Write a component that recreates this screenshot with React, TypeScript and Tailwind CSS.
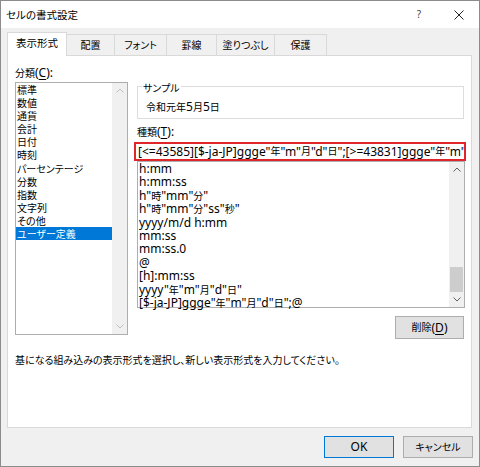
import React from "react";

const CJK = /([\u3000-\u30ff\u3400-\u9fff\uff00-\uffef]+)/;

function T({ s }: { s: string }) {
  const parts = s.split(CJK);
  return (
    <>
      {parts.map((p, i) =>
        p === "" ? null : i % 2 === 1 ? (
          <span key={i} className="text-[10px]">
            {p}
          </span>
        ) : (
          <span key={i}>{p}</span>
        )
      )}
    </>
  );
}

function Up({ color }: { color: string }) {
  return (
    <svg width="8" height="5" viewBox="0 0 8 5">
      <path d="M0.5 4.5 L4 1 L7.5 4.5" fill="none" stroke={color} strokeWidth="1" />
    </svg>
  );
}
function Down({ color }: { color: string }) {
  return (
    <svg width="8" height="5" viewBox="0 0 8 5">
      <path d="M0.5 0.5 L4 4 L7.5 0.5" fill="none" stroke={color} strokeWidth="1" />
    </svg>
  );
}

const categories = [
  "標準",
  "数値",
  "通貨",
  "会計",
  "日付",
  "時刻",
  "パーセンテージ",
  "分数",
  "指数",
  "文字列",
  "その他",
  "ユーザー定義",
];

const formats = [
  "h:mm",
  "h:mm:ss",
  'h"時"mm"分"',
  'h"時"mm"分"ss"秒"',
  "yyyy/m/d h:mm",
  "mm:ss",
  "mm:ss.0",
  "@",
  "[h]:mm:ss",
  'yyyy"年"m"月"d"日"',
  '[$-ja-JP]ggge"年"m"月"d"日";@',
];

const tabs = [
  { label: "配置", w: "w-[48px]" },
  { label: "フォント", w: "w-[52px]" },
  { label: "罫線", w: "w-[50px]" },
  { label: "塗りつぶし", w: "w-[58px]" },
  { label: "保護", w: "w-[52px]" },
];

export default function App() {
  return (
    <div className="w-[480px] h-[467px] border border-[#8c8c8c] bg-[#f0f0f0] flex flex-col text-black text-[12px] [font-family:'Noto_Sans','Noto_Sans_CJK_JP',sans-serif] [font-feature-settings:'palt'] overflow-hidden">
      {/* title bar */}
      <div className="h-[27px] bg-white flex items-center shrink-0">
        <div className="pl-[5px] leading-[14px] text-[10.5px]">セルの書式設定</div>
        <div className="ml-auto flex h-full">
          <div className="w-[40px] h-full flex items-center justify-center text-[10px] text-[#444]">?</div>
          <div className="w-[40px] h-full flex items-center justify-center">
            <svg width="10" height="10" viewBox="0 0 10 10">
              <path d="M0.5 0.5 L9.5 9.5 M9.5 0.5 L0.5 9.5" stroke="#222" strokeWidth="1" />
            </svg>
          </div>
        </div>
      </div>

      {/* tabs */}
      <div className="mt-[4px] h-[23px] flex items-end pl-[6px] shrink-0 relative z-10">
        <div className="w-[60px] h-[24px] -mb-[1px] bg-white border border-b-0 border-[#d9d9d9] flex items-center justify-center pb-[1px] text-[10.5px]">
          表示形式
        </div>
        {tabs.map((t) => (
          <div
            key={t.label}
            className={`${t.w} h-[21px] bg-[#f0f0f0] border-t border-r border-[#d9d9d9] flex items-center justify-center`}
          >
            <T s={t.label} />
          </div>
        ))}
      </div>

      {/* panel */}
      <div className="ml-[6px] mr-[7px] h-[373px] bg-white border border-[#d9d9d9] flex flex-col shrink-0 pt-[10px] pl-[7px] pr-[6px]">
        <div className="flex gap-[9px]">
          {/* left column */}
          <div className="w-[113px] flex flex-col">
            <div className="h-[14px] leading-[14px]">
              <T s="分類(" />
              <span className="underline underline-offset-2">C</span>
              <span>):</span>
            </div>
            <div className="mt-[2px] h-[253px] border border-[#adadad] flex">
              <div className="flex-1 flex flex-col leading-[13.1px]">
                {categories.map((c, i) => (
                  <div
                    key={c}
                    className={
                      i === categories.length - 1
                        ? "h-[13.1px] pl-[1px] bg-[#0078d7] text-white whitespace-nowrap"
                        : "h-[13.1px] pl-[1px] whitespace-nowrap"
                    }
                  >
                    <T s={c} />
                  </div>
                ))}
              </div>
              <div className="w-[15px] bg-[#f0f0f0] flex flex-col">
                <div className="h-[15px] flex items-center justify-center">
                  <Up color="#bfbfbf" />
                </div>
                <div className="flex-1" />
                <div className="h-[15px] flex items-center justify-center">
                  <Down color="#bfbfbf" />
                </div>
              </div>
            </div>
          </div>

          {/* right column */}
          <div className="w-[328px] flex flex-col">
            <div className="mt-[20px] mr-[1px] h-[33px] border border-[#dcdcdc] flex flex-col">
              <div className="-mt-[6px] ml-[4px] px-[1px] bg-white w-fit leading-[14px]">
                <T s="サンプル" />
              </div>
              <div className="mt-[5px] pl-[8px] leading-[14px]">
                <T s="令和元年5月5日" />
              </div>
            </div>
            <div className="mt-[6px] h-[14px] leading-[14px]">
              <T s="種類(" />
              <span className="underline underline-offset-2">T</span>
              <span>):</span>
            </div>
            <div className="mt-[3px] -ml-[3px] w-[332px] h-[19px] border-2 border-[#e0262b] flex items-center pl-[2px] overflow-hidden whitespace-nowrap">
              <T s={'[<=43585][$-ja-JP]ggge"年"m"月"d"日";[>=43831]ggge"年"m"月"d"日"'} />
            </div>
            <div className="h-[147px] border border-[#adadad] flex">
              <div className="flex-1 flex flex-col leading-[13.4px] pl-[1px]">
                {formats.map((f) => (
                  <div key={f} className="h-[13.4px] whitespace-nowrap">
                    <T s={f} />
                  </div>
                ))}
              </div>
              <div className="w-[15px] bg-[#f0f0f0] flex flex-col">
                <div className="h-[15px] flex items-center justify-center">
                  <Up color="#606060" />
                </div>
                <div className="flex-1 flex flex-col justify-end px-[1px]">
                  <div className="h-[25px] bg-[#cdcdcd]" />
                </div>
                <div className="h-[15px] flex items-center justify-center">
                  <Down color="#606060" />
                </div>
              </div>
            </div>
            <div className="mt-[8px] self-end mr-[1px] w-[69px] h-[23px] bg-[#e1e1e1] border border-[#adadad] flex items-center justify-center">
              <T s="削除(" />
              <span className="underline underline-offset-2">D</span>
              <span>)</span>
            </div>
          </div>
        </div>
        <div className="mt-[14px] leading-[14px] whitespace-nowrap text-[10px]">
          基になる組み込みの表示形式を選択し、新しい表示形式を入力してください。
        </div>
      </div>

      {/* bottom buttons */}
      <div className="mt-[8px] h-[22px] flex justify-end gap-[9px] pr-[6px] shrink-0">
        <div className="w-[70px] h-[22px] bg-[#e1e1e1] border border-[#0078d7] flex items-center justify-center">
          OK
        </div>
        <div className="w-[70px] h-[22px] bg-[#e1e1e1] border border-[#adadad] flex items-center justify-center text-[10px]">
          キャンセル
        </div>
      </div>
    </div>
  );
}
